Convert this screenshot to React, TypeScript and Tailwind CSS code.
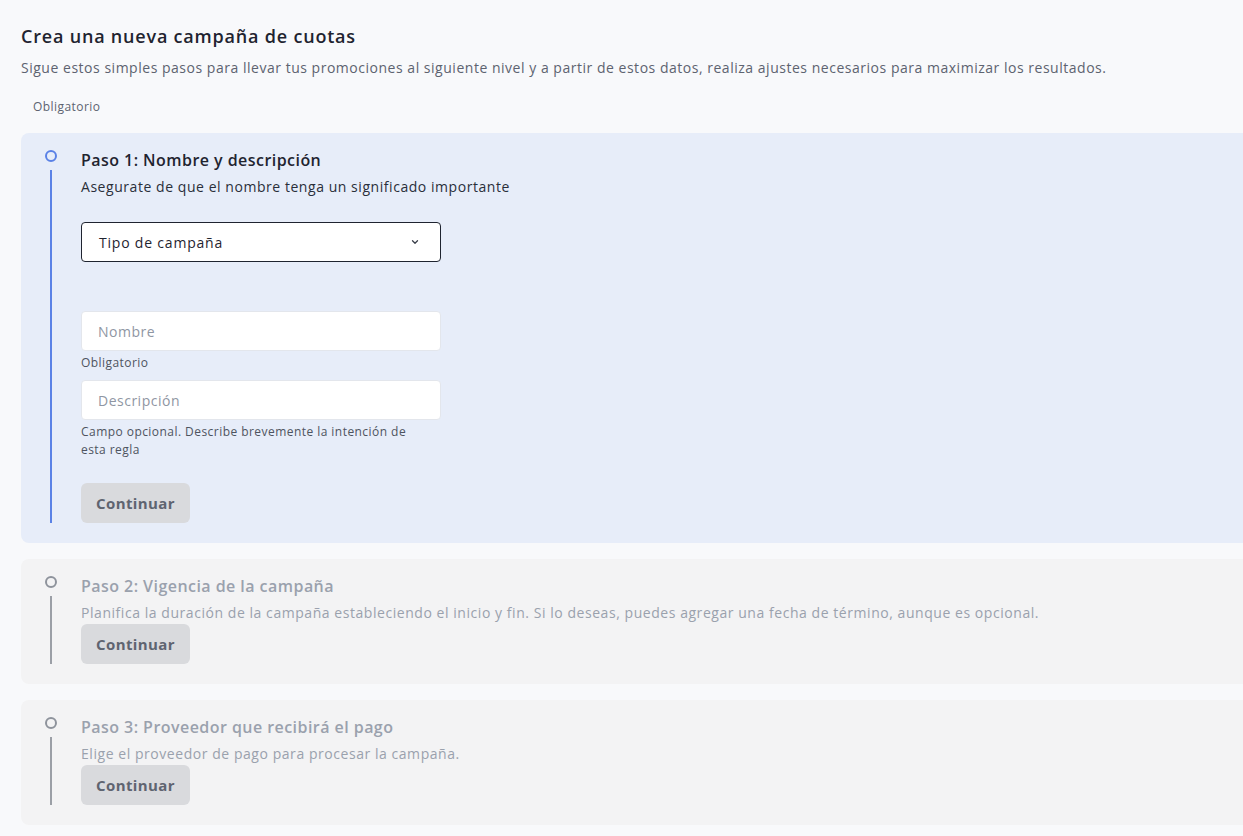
import React from "react";

const font = { fontFamily: '"Open Sans", "Noto Sans", sans-serif' };

function Ring({ active }: { active: boolean }) {
  return (
    <div
      className={`w-[12px] h-[12px] rounded-full border-2 ${active ? "border-[#5b82e6]" : "border-[#8e939c]"}`}
    />
  );
}

function Step({
  active,
  title,
  desc,
  children,
}: {
  active: boolean;
  title: string;
  desc: string;
  children?: React.ReactNode;
}) {
  return (
    <div
      className={`ml-[21px] rounded-l-lg ${active ? "bg-[#e7edf9]" : "bg-[#f3f3f4]"} pt-[16px] pb-[20px] flex`}
    >
      <div className="w-[60px] flex flex-col items-center pt-[1px]">
        <Ring active={active} />
        <div className={`mt-[8px] w-[2px] flex-1 ${active ? "bg-[#5b82e6]" : "bg-[#9b9fa6]"}`} />
      </div>
      <div className="flex-1">
        <div
          className={`text-[16px] leading-[22px] font-semibold tracking-[0.45px] ${active ? "text-[#1f2430]" : "text-[#9aa1ad]"}`}
        >
          {title}
        </div>
        <div
          className={`mt-[5px] text-[14px] leading-[22px] tracking-[0.55px] ${active ? "text-[#2a2f3a]" : "text-[#9aa1ad]"}`}
        >
          {desc}
        </div>
        {children}
        <button className="h-[40px] w-[109px] rounded-md bg-[#d9dadd] text-[15px] font-bold tracking-[0.4px] text-[#5f6470]">
          Continuar
        </button>
      </div>
    </div>
  );
}

export default function App() {
  return (
    <div className="min-h-[836px] w-[1243px] bg-[#f8f9fb] pt-[24px] overflow-hidden" style={font}>
      <div className="pl-[21px]">
        <h1 className="text-[18px] leading-[24px] font-semibold tracking-[0.8px] text-[#1f2430]">
          Crea una nueva campaña de cuotas
        </h1>
        <p className="mt-[10px] text-[14px] leading-[20px] tracking-[0.52px] text-[#5d6370] whitespace-nowrap">
          Sigue estos simples pasos para llevar tus promociones al siguiente nivel y a partir de estos datos, realiza ajustes necesarios para maximizar los resultados.
        </p>
        <p className="mt-[21px] pl-[12px] text-[12px] leading-[16px] tracking-[0.45px] text-[#5d6370]">Obligatorio</p>
      </div>
      <div className="mt-[18px] flex flex-col gap-[16px]">
        <Step
          active
          title="Paso 1: Nombre y descripción"
          desc="Asegurate de que el nombre tenga un significado importante"
        >
          <div className="mt-[24px] w-[360px]">
            <div className="h-[40px] rounded-[4px] border border-[#1f2430] bg-white flex items-center justify-between pl-[17px] pr-[20px]">
              <span className="text-[14px] tracking-[0.8px] text-[#1f2430]">Tipo de campaña</span>
              <svg width="10" height="10" viewBox="0 0 10 10" fill="none">
                <path d="M2.5 3.8 L5 6.2 L7.5 3.8" stroke="#3a3f4a" strokeWidth="1.3" strokeLinecap="round" strokeLinejoin="round" />
              </svg>
            </div>
            <div className="mt-[49px] h-[40px] rounded-[4px] border border-[#e3e6ec] bg-white flex items-center pl-[16px]">
              <span className="text-[14px] tracking-[0.5px] text-[#8f96a3]">Nombre</span>
            </div>
            <div className="mt-[3px] text-[12px] leading-[18px] tracking-[0.45px] text-[#4e5460]">Obligatorio</div>
            <div className="mt-[8px] h-[40px] rounded-[4px] border border-[#e3e6ec] bg-white flex items-center pl-[16px]">
              <span className="text-[14px] tracking-[0.5px] text-[#8f96a3]">Descripción</span>
            </div>
            <div className="mt-[3px] pr-[20px] text-[12px] leading-[18px] tracking-[0.45px] text-[#4e5460]">
              Campo opcional. Describe brevemente la intención de esta regla
            </div>
          </div>
          <div className="h-[24px]" />
        </Step>
        <Step
          active={false}
          title="Paso 2: Vigencia de la campaña"
          desc="Planifica la duración de la campaña estableciendo el inicio y fin. Si lo deseas, puedes agregar una fecha de término, aunque es opcional."
        />
        <Step
          active={false}
          title="Paso 3: Proveedor que recibirá el pago"
          desc="Elige el proveedor de pago para procesar la campaña."
        />
      </div>
    </div>
  );
}
